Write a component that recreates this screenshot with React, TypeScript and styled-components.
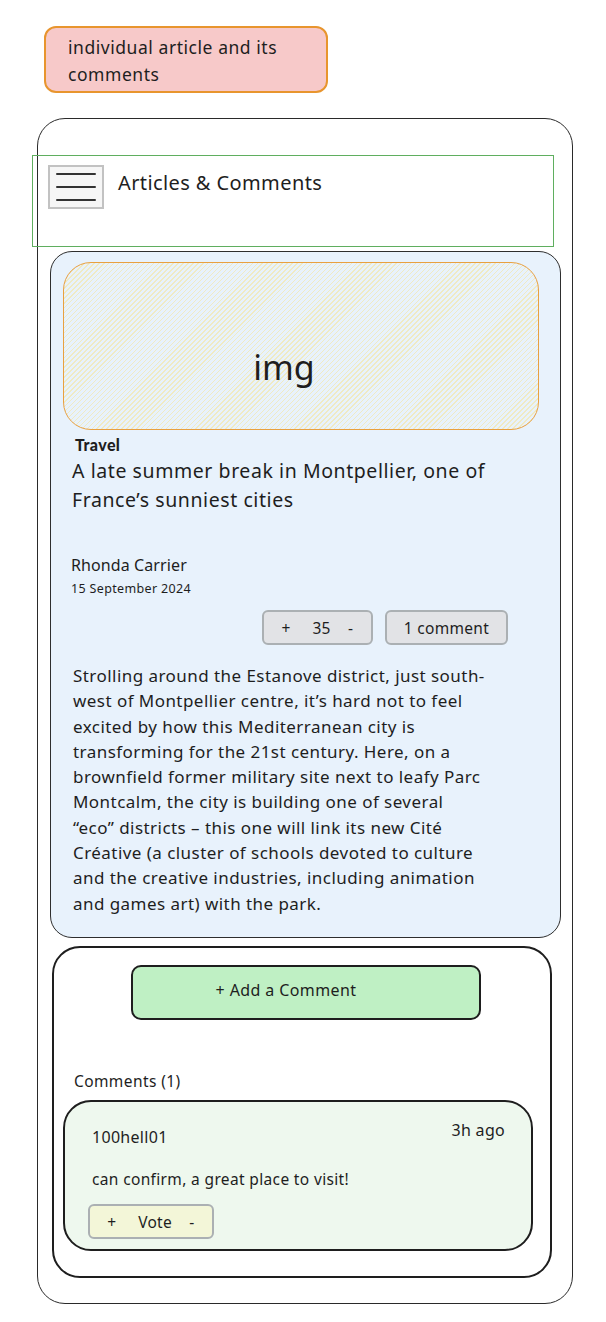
import React from "react";
import styled, { createGlobalStyle } from "styled-components";

const GlobalStyle = createGlobalStyle`
  body {
    margin: 0;
    background: #ffffff;
    font-family: "Noto Sans", "Open Sans", sans-serif;
    color: #1e1e1e;
  }
`;

const Page = styled.div`
  padding: 26px 0 0 37px;
  width: 606px;
  height: 1322px;
  box-sizing: border-box;
`;

const Note = styled.div`
  margin-left: 7px;
  width: 284px;
  height: 67px;
  box-sizing: border-box;
  background: #f7c9c9;
  border: 2.5px solid #e8952e;
  border-radius: 12px;
  padding: 6px 0 0 22px;
  font-size: 17.5px;
  line-height: 27px;
  letter-spacing: 0.55px;
`;

const Frame = styled.div`
  margin-top: 25px;
  width: 536px;
  height: 1186px;
  box-sizing: border-box;
  border: 1.3px solid #2a2a2a;
  border-radius: 28px;
  padding-top: 36px;
`;

const Header = styled.div`
  margin-left: -6px;
  width: 522px;
  height: 92px;
  box-sizing: border-box;
  border: 1px solid #5fae5f;
  display: flex;
  align-items: flex-start;
  gap: 14px;
  padding: 9px 0 0 15px;
`;

const Burger = styled.div`
  width: 56px;
  height: 44px;
  box-sizing: border-box;
  border: 2px solid #c2c2c2;
  background: #f6f6f6;
  display: flex;
  flex-direction: column;
  justify-content: center;
  gap: 11px;
  padding: 0 6px;
`;

const BurgerLine = styled.span`
  display: block;
  height: 2px;
  background: #333;
  border-radius: 1px;
`;

const Title = styled.div`
  font-size: 20px;
  line-height: 28px;
  margin-top: 4px;
  letter-spacing: 0.4px;
`;

const ArticleCard = styled.div`
  margin: 4px 0 0 12px;
  width: 511px;
  height: 687px;
  box-sizing: border-box;
  background: #e8f2fc;
  border: 1px solid #2e2e2e;
  border-radius: 22px;
  padding: 10px 0 0 12px;
`;

const ImagePlaceholder = styled.div`
  width: 476px;
  height: 168px;
  box-sizing: border-box;
  border: 1.6px solid #e8a040;
  border-radius: 28px;
  background: repeating-linear-gradient(
    135deg,
    rgba(245, 228, 150, 0.55) 0px,
    rgba(245, 228, 150, 0.55) 1px,
    transparent 1px,
    transparent 3.5px
  );
  display: flex;
  align-items: center;
  justify-content: center;
  padding: 42px 34px 0 0;
  font-size: 34px;
  color: #1e1e1e;
`;

const Category = styled.div`
  margin: 6px 0 0 12px;
  font-family: "Lato", sans-serif;
  font-weight: 900;
  font-size: 16px;
  line-height: 18px;
  letter-spacing: 0.4px;
`;

const Headline = styled.div`
  margin: 2px 0 0 9px;
  font-size: 19.5px;
  line-height: 29px;
  letter-spacing: 0.57px;
`;

const Author = styled.div`
  margin: 40px 0 0 8px;
  font-size: 16px;
  line-height: 22px;
  letter-spacing: 0.1px;
`;

const DateLine = styled.div`
  margin: 4px 0 0 8px;
  font-size: 12.5px;
  line-height: 18px;
  letter-spacing: 0.35px;
`;

const ActionRow = styled.div`
  display: flex;
  gap: 12px;
  margin: 12px 0 0 199px;
`;

const Chip = styled.div<{ $w: number; $bg: string }>`
  width: ${(p) => p.$w}px;
  height: 35px;
  box-sizing: border-box;
  background: ${(p) => p.$bg};
  border: 2px solid #abb0b3;
  border-radius: 6px;
  display: flex;
  align-items: center;
  justify-content: center;
  font-size: 15.5px;
  white-space: pre;
  letter-spacing: 0.3px;
`;

const Body = styled.p`
  margin: 18px 0 0 10px;
  font-size: 17px;
  line-height: 25.3px;
  letter-spacing: 0.45px;
  white-space: nowrap;
`;

const CommentsBox = styled.div`
  margin: 8px 0 0 14px;
  width: 500px;
  height: 332px;
  box-sizing: border-box;
  background: #ffffff;
  border: 2px solid #1e1e1e;
  border-radius: 28px;
  padding: 17px 0 0 9px;
`;

const AddButton = styled.div`
  margin-left: 68px;
  width: 350px;
  height: 55px;
  box-sizing: border-box;
  background: #bff0c4;
  border: 2px solid #1e1e1e;
  border-radius: 10px;
  display: flex;
  justify-content: center;
  padding: 12px 40px 0 0;
  font-size: 16px;
  line-height: 22px;
  letter-spacing: 0.4px;
`;

const CommentsLabel = styled.div`
  margin: 50px 0 0 11px;
  font-size: 15.5px;
  line-height: 22px;
  letter-spacing: 0.4px;
`;

const CommentCard = styled.div`
  margin: 8px 0 0 0;
  width: 470px;
  height: 151px;
  box-sizing: border-box;
  background: #eef8ee;
  border: 2px solid #1e1e1e;
  border-radius: 28px;
  padding: 0 26px 0 27px;
  display: flex;
  flex-direction: column;
`;

const CommentHead = styled.div`
  display: flex;
  justify-content: space-between;
  align-items: flex-start;
`;

const CommentUser = styled.div`
  margin-top: 24px;
  font-size: 16px;
  line-height: 22px;
  letter-spacing: 0.3px;
`;

const CommentTime = styled.div`
  margin-top: 17px;
  font-size: 16px;
  line-height: 22px;
  letter-spacing: 0.3px;
`;

const CommentText = styled.div`
  margin-top: 20px;
  font-size: 15.5px;
  line-height: 22px;
  letter-spacing: 0.35px;
`;

const VoteRow = styled.div`
  margin: 14px 0 0 -4px;
`;

export default function App() {
  return (
    <>
      <GlobalStyle />
      <Page>
        <Note>
          individual article and its
          <br />
          comments
        </Note>
        <Frame>
          <Header>
            <Burger>
              <BurgerLine />
              <BurgerLine />
              <BurgerLine />
            </Burger>
            <Title>Articles &amp; Comments</Title>
          </Header>
          <ArticleCard>
            <ImagePlaceholder>img</ImagePlaceholder>
            <Category>Travel</Category>
            <Headline>
              A late summer break in Montpellier, one of
              <br />
              France’s sunniest cities
            </Headline>
            <Author>Rhonda Carrier</Author>
            <DateLine>15 September 2024</DateLine>
            <ActionRow>
              <Chip $w={111} $bg="#e2e3e6">{"+     35    -"}</Chip>
              <Chip $w={123} $bg="#e2e3e6">1 comment</Chip>
            </ActionRow>
            <Body>
              Strolling around the Estanove district, just south-
              <br />
              west of Montpellier centre, it’s hard not to feel
              <br />
              excited by how this Mediterranean city is
              <br />
              transforming for the 21st century. Here, on a
              <br />
              brownfield former military site next to leafy Parc
              <br />
              Montcalm, the city is building one of several
              <br />
              “eco” districts – this one will link its new Cité
              <br />
              Créative (a cluster of schools devoted to culture
              <br />
              and the creative industries, including animation
              <br />
              and games art) with the park.
            </Body>
          </ArticleCard>
          <CommentsBox>
            <AddButton>+ Add a Comment</AddButton>
            <CommentsLabel>Comments (1)</CommentsLabel>
            <CommentCard>
              <CommentHead>
                <CommentUser>100hell01</CommentUser>
                <CommentTime>3h ago</CommentTime>
              </CommentHead>
              <CommentText>can confirm, a great place to visit!</CommentText>
              <VoteRow>
                <Chip $w={126} $bg="#f3f6d8">{"+     Vote    -"}</Chip>
              </VoteRow>
            </CommentCard>
          </CommentsBox>
        </Frame>
      </Page>
    </>
  );
}
